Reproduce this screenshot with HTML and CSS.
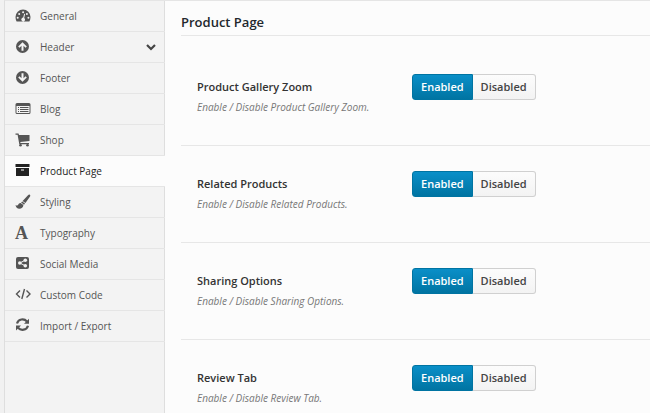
FILE: index.html
```
<!DOCTYPE html>
<html lang="en">
<head>
    <meta charset="UTF-8">
    <meta name="viewport" content="width=device-width, initial-scale=1.0">
    <title>Theme Options</title>
    <link rel="stylesheet" href="styles.css">
</head>
<body>
    <div class="panel">
        <nav class="sidebar">
            <ul class="menu">
                <li><a href="#general">
                    <svg class="icon" viewBox="0 0 16 16"><path fill-rule="evenodd" d="M8 1.500a7.500 7.500 0 0 0-7.500 7.500c0 1.700.4 3.200 1.100 4.500h12.800c.7-1.300 1.100-2.800 1.100-4.500A7.500 7.500 0 0 0 8 1.500zM7.100 4.200a1 1 0 1 1 2 0 1 1 0 0 1-2 0zM3.200 6a1 1 0 1 1 2 0 1 1 0 0 1-2 0zM10.900 6a1 1 0 1 1 2 0 1 1 0 0 1-2 0zM1.700 9.700a1 1 0 1 1 2 0 1 1 0 0 1-2 0zM12.400 9.700a1 1 0 1 1 2 0 1 1 0 0 1-2 0zM9.200 5.800l.9.3-.9 3.800a1.900 1.900 0 1 1-1-.3z"/></svg>
                    General</a></li>
                <li><a href="#header">
                    <svg class="icon" viewBox="0 0 16 16"><path fill-rule="evenodd" d="M7.500 1a6.500 6.500 0 1 0 0 13 6.500 6.500 0 0 0 0-13zM7.500 3.200l4.300 4.300-1.300 1.300-2-2v4.900h-2V6.800l-2 2-1.300-1.300z"/></svg>
                    Header
                    <svg class="arrow" viewBox="0 0 10 10"><path d="M1 3l4 4 4-4" fill="none" stroke="currentColor" stroke-width="2.200"/></svg></a></li>
                <li><a href="#footer">
                    <svg class="icon" viewBox="0 0 16 16"><path fill-rule="evenodd" d="M7.500 1a6.500 6.500 0 1 0 0 13 6.500 6.500 0 0 0 0-13zM7.500 11.800L3.200 7.500l1.300-1.300 2 2V3.300h2v4.900l2-2 1.300 1.300z"/></svg>
                    Footer</a></li>
                <li><a href="#blog">
                    <svg class="icon" viewBox="0 0 16 16"><path fill-rule="evenodd" d="M2 2h12a1.500 1.500 0 0 1 1.500 1.500v8A1.500 1.500 0 0 1 14 13H2a1.500 1.500 0 0 1-1.500-1.500v-8A1.500 1.500 0 0 1 2 2zM1.500 5v6.500q0 .5.500.5h12q.5 0 .5-.5V5zM3 6h1v1H3zM5 6h8.500v1H5zM3 8h1v1H3zM5 8h8.500v1H5zM3 10h1v1H3zM5 10h8.500v1H5z"/></svg>
                    Blog</a></li>
                <li><a href="#shop">
                    <svg class="icon" viewBox="0 0 16 16"><path d="M.5 1.500h3l.5 1.500h10.500v6L5.300 10.100l.2.900h8.500v1.200H4.300L2.600 2.700H.5z"/><circle cx="5.500" cy="13.200" r="1.300"/><circle cx="12.500" cy="13.200" r="1.300"/></svg>
                    Shop</a></li>
                <li class="active"><a href="#product-page">
                    <svg class="icon" viewBox="0 0 16 16"><path fill-rule="evenodd" d="M.5 1h14v3H.5zM1 5h13v8H1zM6 6.500v1h3v-1z"/></svg>
                    Product Page</a></li>
                <li><a href="#styling">
                    <svg class="icon" viewBox="0 0 16 16"><path d="M14.800.8c.8.500.5 1.300.1 2L10.400 9 7.600 7l5.400-5.700c.6-.6 1.200-.9 1.800-.5zM7.200 7.400l2.800 2.200-1 1.200-2.900-2.300zM5.600 8.900l2.800 2.200c-.2 2.600-1.900 3.600-4 3.600-2.300 0-3.500-1.600-3.900-3.800 1.500 1 2.200.7 2.700-.2.500-1.200 1.300-1.900 2.400-1.800z"/></svg>
                    Styling</a></li>
                <li><a href="#typography">
                    <span class="icon letter" aria-hidden="true">A</span>
                    Typography</a></li>
                <li><a href="#social-media">
                    <svg class="icon" viewBox="0 0 16 16"><path fill-rule="evenodd" d="M3 1h9a2 2 0 0 1 2 2v8a2 2 0 0 1-2 2H3a2 2 0 0 1-2-2V3a2 2 0 0 1 2-2z"/><g fill="#f3f3f3"><circle cx="4.800" cy="7" r="1.800"/><circle cx="10.300" cy="4.200" r="1.800"/><circle cx="10.300" cy="9.800" r="1.800"/></g><path d="M10.300 4.200L4.800 7l5.500 2.800" fill="none" stroke="#f3f3f3"/></svg>
                    Social Media</a></li>
                <li><a href="#custom-code">
                    <svg class="icon" viewBox="0 0 16 16"><path d="M5 3.500L1.500 7 5 10.500M11.500 3.500L15 7l-3.500 3.500M9.500 2l-2.700 10" fill="none" stroke="currentColor" stroke-width="1.400"/></svg>
                    Custom Code</a></li>
                <li><a href="#import-export">
                    <svg class="icon" viewBox="0 0 16 16"><path d="M2 5.500C3.300.9 9 .2 12 3.400M13 7.700C11.700 12.300 6 13 3 9.800" fill="none" stroke="currentColor" stroke-width="2.200"/><path d="M14 .7v5H9zM1 12.500v-5h5z"/></svg>
                    Import / Export</a></li>
            </ul>
        </nav>

        <main class="content">
            <h2>Product Page</h2>

            <div class="option">
                <div class="option-label">
                    <h3 id="gallery-zoom">Product Gallery Zoom</h3>
                    <p>Enable / Disable Product Gallery Zoom.</p>
                </div>
                <div class="switch" role="group" aria-labelledby="gallery-zoom">
                    <button type="button" class="selected" aria-pressed="true">Enabled</button>
                    <button type="button" aria-pressed="false">Disabled</button>
                </div>
            </div>

            <div class="option">
                <div class="option-label">
                    <h3 id="related-products">Related Products</h3>
                    <p>Enable / Disable Related Products.</p>
                </div>
                <div class="switch" role="group" aria-labelledby="related-products">
                    <button type="button" class="selected" aria-pressed="true">Enabled</button>
                    <button type="button" aria-pressed="false">Disabled</button>
                </div>
            </div>

            <div class="option">
                <div class="option-label">
                    <h3 id="sharing-options">Sharing Options</h3>
                    <p>Enable / Disable Sharing Options.</p>
                </div>
                <div class="switch" role="group" aria-labelledby="sharing-options">
                    <button type="button" class="selected" aria-pressed="true">Enabled</button>
                    <button type="button" aria-pressed="false">Disabled</button>
                </div>
            </div>

            <div class="option">
                <div class="option-label">
                    <h3 id="review-tab">Review Tab</h3>
                    <p>Enable / Disable Review Tab.</p>
                </div>
                <div class="switch" role="group" aria-labelledby="review-tab">
                    <button type="button" class="selected" aria-pressed="true">Enabled</button>
                    <button type="button" aria-pressed="false">Disabled</button>
                </div>
            </div>
        </main>
    </div>

    <script>
        // Toggle the buttons inside each switch
        document.querySelectorAll('.switch button').forEach(button => {
            button.addEventListener('click', () => {
                button.parentElement.querySelectorAll('button').forEach(item => {
                    item.classList.toggle('selected', item === button);
                    item.setAttribute('aria-pressed', item === button);
                });
            });
        });
    </script>
</body>
</html>
```

FILE: styles.css
```
* {
    box-sizing: border-box;
}

body {
    margin: 0;
    font-family: "Open Sans", sans-serif;
    font-size: 11px;
    line-height: 18px;
    color: #444;
    background-color: #f1f1f1;
}

.panel {
    display: flex;
    min-height: 100vh;
    margin-left: 4px;
    border-top: 1px solid #e5e5e5;
    border-left: 1px solid #dedede;
    background-color: #fcfcfc;
}

/* Sidebar */
.sidebar {
    flex: none;
    width: 160px;
    background-color: #f3f3f3;
    box-shadow: inset -1px 0 #dedede;
}

.menu {
    margin: 0;
    padding: 0;
    list-style: none;
}

.menu a {
    display: flex;
    align-items: center;
    gap: 9px;
    height: 31px;
    padding: 0 10px 1px;
    border-bottom: 1px solid #e5e5e5;
    font-size: 10px;
    color: #555;
    text-decoration: none;
}

.menu a:hover,
.menu .active a {
    color: #222;
}

.menu .active a {
    background-color: #fcfcfc;
}

.icon {
    flex: none;
    width: 16px;
    height: 16px;
    fill: currentColor;
    color: #555;
}

.active .icon {
    color: #222;
}

.letter {
    font: bold 18px/16px "Liberation Serif", serif;
}

.arrow {
    width: 10px;
    height: 10px;
    margin-left: auto;
    margin-right: -1px;
    color: #444;
}

/* Options */
.content {
    flex: 1;
    min-width: 0;
    padding: 12px 0 0 16px;
}

.content h2 {
    margin: 0 0 13px;
    padding-bottom: 4px;
    border-bottom: 1px solid #e7e7e7;
    font-size: 13px;
    font-weight: 600;
    line-height: 18px;
    color: #23282d;
}

.option {
    display: flex;
    align-items: flex-start;
    height: 97px;
    padding: 25px 0 0 16px;
    border-bottom: 1px solid #e7e7e7;
}

.option:last-child {
    height: auto;
    border-bottom: none;
}

.option-label {
    width: 215px;
    padding-top: 4px;
}

.option h3 {
    margin: 0;
    font-size: 11px;
    font-weight: 600;
    line-height: 18px;
    color: #333;
}

.option p {
    margin: 2px 0 0;
    font-size: 10px;
    font-style: italic;
    line-height: 18px;
    color: #777;
}

.switch {
    display: flex;
}

.switch button {
    height: 26px;
    padding: 0 8px;
    border: 1px solid #d0d0d0;
    border-left: none;
    border-radius: 0 3px 3px 0;
    background: linear-gradient(#fcfcfc, #f3f3f3);
    font: 600 11px/18px "Open Sans", sans-serif;
    color: #444;
    cursor: pointer;
}

.switch button:first-child {
    border-left: 1px solid #d0d0d0;
    border-radius: 3px 0 0 3px;
}

.switch button.selected {
    border-color: #0074a2;
    background: linear-gradient(#0a8fc8, #0074a2);
    color: #fff;
}
```
